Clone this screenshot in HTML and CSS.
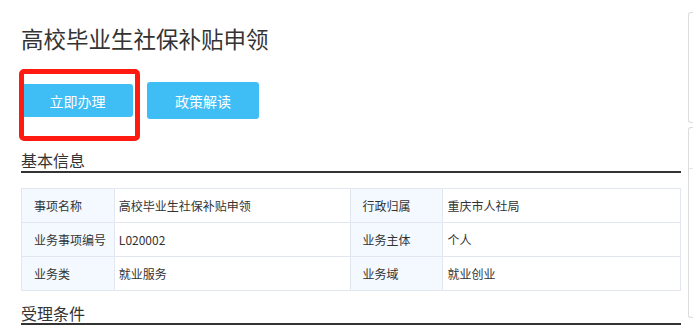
FILE: index.html
```html
<!DOCTYPE html>
<html lang="zh-CN">
<head>
    <meta charset="UTF-8">
    <meta name="viewport" content="width=device-width, initial-scale=1.0">
    <title>高校毕业生社保补贴申领</title>
    <link rel="stylesheet" href="styles.css">
</head>
<body>
    <div class="page">
        <main class="content">
            <h1 class="title">高校毕业生社保补贴申领</h1>

            <div class="actions">
                <div class="markWrap">
                    <button class="btn btnApply">立即办理</button>
                    <span class="mark"></span>
                </div>
                <button class="btn btnPolicy">政策解读</button>
            </div>

            <!-- 基本信息 -->
            <h3 class="sectionTitle">基本信息</h3>
            <table class="infoTable">
                <colgroup>
                    <col class="colLabel">
                    <col class="colValue">
                    <col class="colLabel">
                    <col class="colValue2">
                </colgroup>
                <tr>
                    <td class="label">事项名称</td>
                    <td class="value">高校毕业生社保补贴申领</td>
                    <td class="label">行政归属</td>
                    <td class="value">重庆市人社局</td>
                </tr>
                <tr>
                    <td class="label">业务事项编号</td>
                    <td class="value">L020002</td>
                    <td class="label">业务主体</td>
                    <td class="value">个人</td>
                </tr>
                <tr>
                    <td class="label">业务类</td>
                    <td class="value">就业服务</td>
                    <td class="label">业务域</td>
                    <td class="value">就业创业</td>
                </tr>
            </table>

            <h3 class="sectionTitle second">受理条件</h3>
        </main>

        <aside class="side">
            <div class="sideBox boxTop"></div>
            <div class="sideBox boxBottom">
                <div class="sideHead"></div>
            </div>
        </aside>
    </div>
</body>
</html>
```

FILE: styles.css
```css
* {
    margin: 0;
    padding: 0;
    box-sizing: border-box;
}
body {
    font-family: "Noto Sans CJK SC", "Liberation Sans", sans-serif;
    color: #333;
    background-color: #fff;
    overflow: hidden;
}
.page {
    display: flex;
    gap: 7px;
}
.content {
    width: 681px;
    flex-shrink: 0;
    padding-left: 21px;
}
.title {
    font-size: 22.5px;
    font-weight: normal;
    line-height: 30px;
    padding-top: 23px;
    color: #333;
}
.actions {
    display: flex;
    align-items: flex-start;
    gap: 14px;
    margin-top: 29px;
}
.markWrap {
    position: relative;
    margin-left: 1px;
    margin-top: 2px;
}
.btn {
    display: block;
    border: none;
    border-radius: 3px;
    background-color: #3fbef5;
    color: #fff;
    font-family: inherit;
    font-size: 14px;
    cursor: pointer;
}
.btnApply {
    width: 111px;
    height: 33px;
}
.btnPolicy {
    width: 112px;
    height: 37px;
}
.mark {
    position: absolute;
    left: -3px;
    top: -15px;
    right: -7px;
    bottom: -24px;
    border: 5px solid #ff1a12;
    border-radius: 5px;
}
.sectionTitle {
    font-size: 16px;
    font-weight: normal;
    line-height: 20px;
    margin-top: 31px;
    padding-bottom: 1px;
    border-bottom: 2px solid #333;
}
.sectionTitle.second {
    margin-top: 13px;
    line-height: 18px;
}
.infoTable {
    width: 660px;
    margin-top: 15px;
    border-collapse: collapse;
    font-size: 12px;
}
.colLabel { width: 93px; }
.colValue { width: 236px; }
.colValue2 { width: 238px; }
.infoTable td {
    height: 34px;
    border: 1px solid #e1e6f0;
    vertical-align: middle;
}
.label {
    background-color: #f3f9fe;
    padding-left: 12px;
}
.value {
    padding-left: 4px;
}
.side {
    flex: 1;
    min-width: 0;
    padding-top: 12px;
}
.sideBox {
    border: 1px solid #dcdcdc;
    border-right: none;
    border-radius: 3px 0 0 3px;
}
.boxTop {
    height: 111px;
}
.boxBottom {
    height: 191px;
    margin-top: 4px;
}
.sideHead {
    height: 41px;
    border-bottom: 1px solid #e6e6e6;
}
```
